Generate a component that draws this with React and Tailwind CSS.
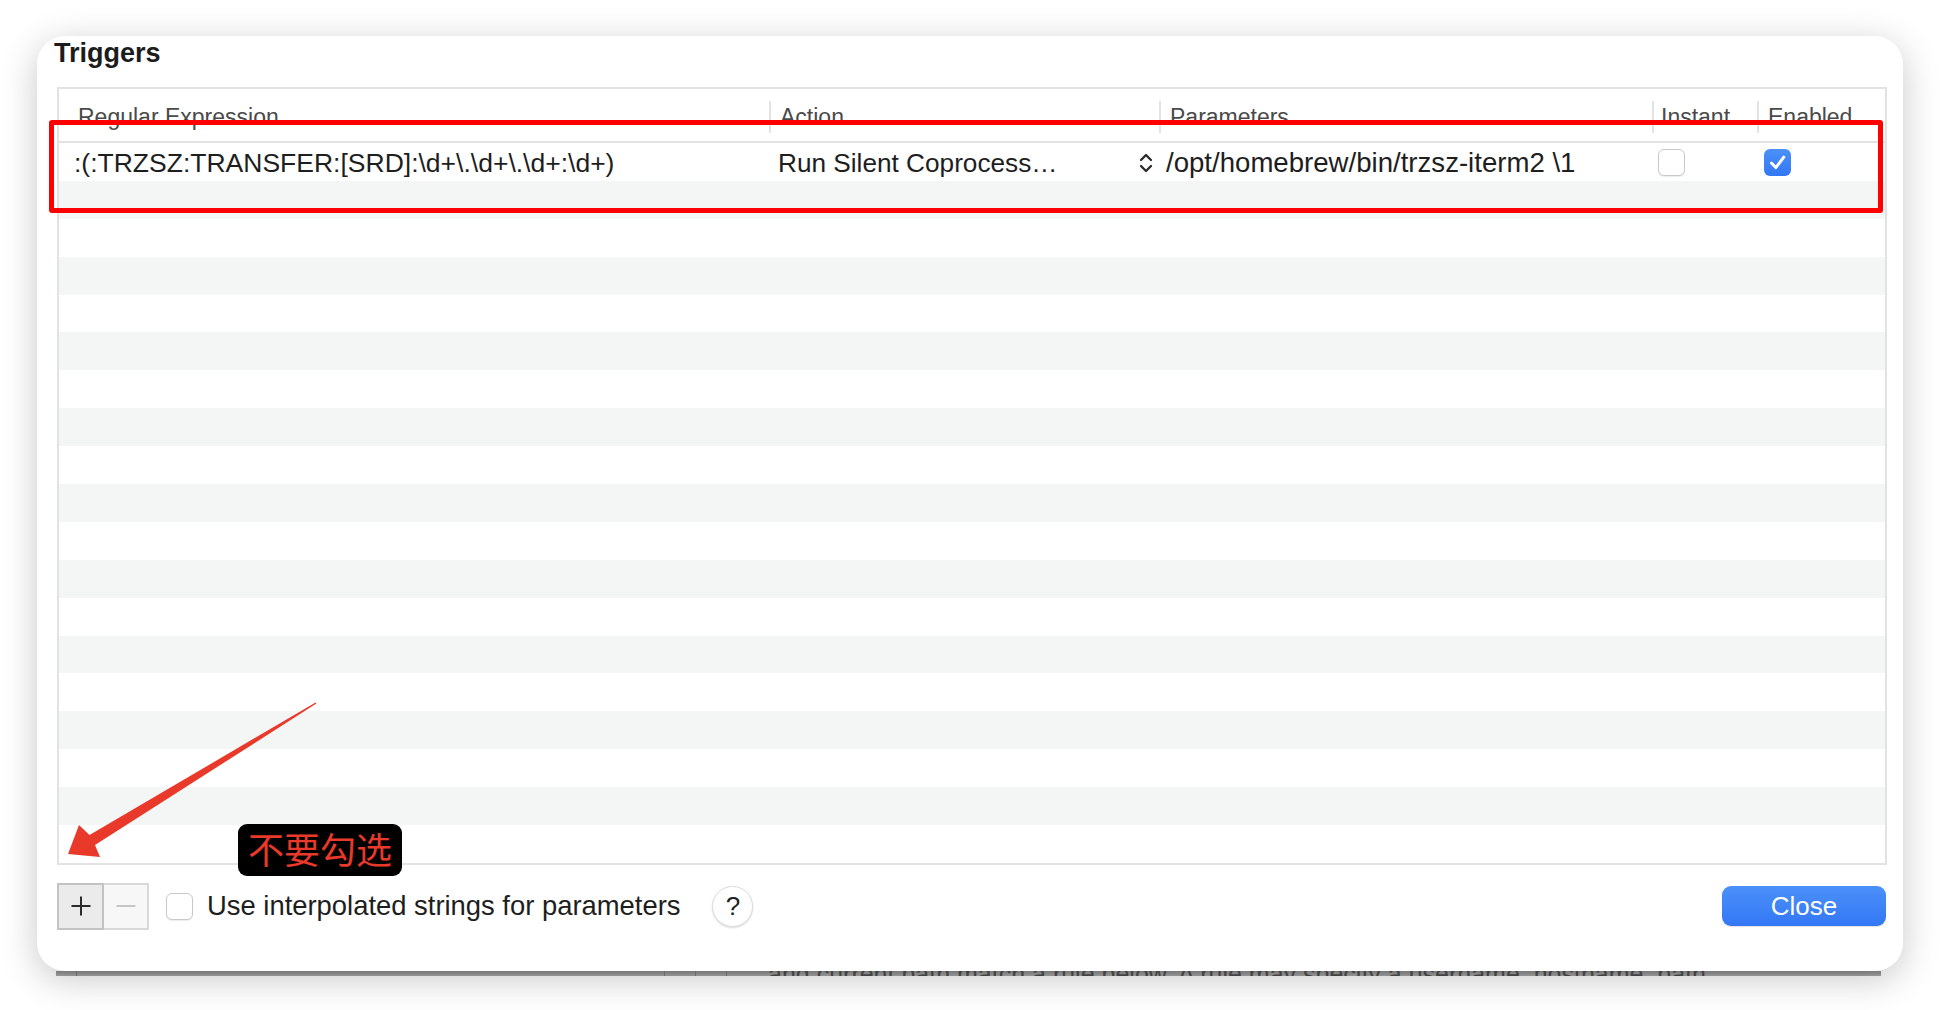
import React from "react";

const FONT = "font-['Liberation_Sans','Helvetica_Neue',Arial,sans-serif]";

function UpDown() {
  return (
    <svg width="16" height="24" viewBox="0 0 16 24" fill="none">
      <path d="M3 9 L8 4 L13 9" stroke="#2a2a2a" strokeWidth="2.3" strokeLinecap="round" strokeLinejoin="round" />
      <path d="M3 15 L8 20 L13 15" stroke="#2a2a2a" strokeWidth="2.3" strokeLinecap="round" strokeLinejoin="round" />
    </svg>
  );
}

function Unchecked() {
  return (
    <div className="w-[27px] h-[27px] rounded-[6px] border border-[#c9c9c9] bg-white shadow-[0_1px_1px_rgba(0,0,0,0.08)]" />
  );
}

function Checked() {
  return (
    <div className="w-[27px] h-[27px] rounded-[6px] bg-gradient-to-b from-[#4c90f9] to-[#3277f5] flex items-center justify-center">
      <svg width="27" height="27" viewBox="0 0 27 27" fill="none">
        <path d="M7.5 14 L11.8 18.6 L19.8 8.2" stroke="white" strokeWidth="3" strokeLinecap="round" strokeLinejoin="round" />
      </svg>
    </div>
  );
}

function HeaderCell({ w, label, ml, first }) {
  return (
    <div className={`flex items-center h-full shrink-0 ${w}`}>
      {!first && <div className="w-[2px] h-[32px] bg-[#e3e3e3] shrink-0" />}
      <span className={`${ml} text-[23px] leading-[26px] text-[#4a4a4a] whitespace-nowrap`}>{label}</span>
    </div>
  );
}

export default function App() {
  const emptyRows = Array.from({ length: 18 });
  return (
    <div className={`relative w-[1940px] h-[1010px] overflow-hidden bg-white ${FONT}`}>
      <div className="pt-[36px] pl-[37px]">
        {/* dialog */}
        <div className="relative z-10 w-[1866px] h-[935px] rounded-[28px] bg-white shadow-[0_8px_36px_rgba(0,0,0,0.22)] flex flex-col">
          <div className="pl-[17px] pt-[2px] h-[32px] text-[27px] leading-[30px] font-bold text-[#1c1c1c]">Triggers</div>

          {/* table */}
          <div className="ml-[20px] mt-[19px] w-[1830px] border-2 border-[#e2e2e2] flex flex-col bg-white">
            <div className="h-[54px] border-b-2 border-[#e2e2e2] flex items-center pt-[3px]">
              <HeaderCell first w="w-[710px]" ml="ml-[19px]" label="Regular Expression" />
              <HeaderCell w="w-[390px]" ml="ml-[9px]" label="Action" />
              <HeaderCell w="w-[493px]" ml="ml-[9px]" label="Parameters" />
              <HeaderCell w="w-[105px]" ml="ml-[7px]" label="Instant" />
              <HeaderCell w="w-[128px]" ml="ml-[9px]" label="Enabled" />
            </div>

            {/* data row */}
            <div className="h-[37.9px] flex items-center bg-white text-[#1e1e1e] pt-[2px]">
              <div className="w-[710px] shrink-0 pl-[15px] text-[26.5px] leading-[30px] whitespace-nowrap">
                {":(:TRZSZ:TRANSFER:[SRD]:\\d+\\.\\d+\\.\\d+:\\d+)"}
              </div>
              <div className="w-[392px] shrink-0 pl-[9px] pr-[7px] flex items-center justify-between text-[26.2px] leading-[30px] whitespace-nowrap">
                <span>Run Silent Coprocess…</span>
                <UpDown />
              </div>
              <div className="w-[491px] shrink-0 pl-[5px] text-[27.6px] leading-[30px] whitespace-nowrap">
                {"/opt/homebrew/bin/trzsz-iterm2 \\1"}
              </div>
              <div className="w-[105px] shrink-0 pl-[6px] flex items-center">
                <Unchecked />
              </div>
              <div className="w-[128px] shrink-0 pl-[7px] flex items-center">
                <Checked />
              </div>
            </div>

            {emptyRows.map((_, i) => (
              <div key={i} className={`h-[37.9px] ${i % 2 === 0 ? "bg-[#f4f5f5]" : "bg-white"}`} />
            ))}
          </div>

          {/* bottom bar */}
          <div className="ml-[20px] mr-[17px] mt-[18px] h-[47px] flex items-center">
            <div className="flex h-[47px]">
              <div className="w-[47px] h-[47px] bg-[#ebebeb] border-2 border-[#c3c3c3] flex items-center justify-center">
                <svg width="22" height="22" viewBox="0 0 22 22">
                  <path d="M11 1.5 V20.5 M1.5 11 H20.5" stroke="#2b2b2b" strokeWidth="2" />
                </svg>
              </div>
              <div className="w-[45px] h-[47px] bg-[#f7f7f7] border-2 border-l-0 border-[#d9d9d9] flex items-center justify-center">
                <svg width="22" height="22" viewBox="0 0 22 22">
                  <path d="M1.5 11 H20.5" stroke="#c6c6c6" strokeWidth="2" />
                </svg>
              </div>
            </div>
            <div className="ml-[17px]">
              <Unchecked />
            </div>
            <span className="ml-[14px] text-[27.4px] leading-[30px] text-[#1e1e1e] whitespace-nowrap">
              Use interpolated strings for parameters
            </span>
            <div className="ml-[32px] w-[41px] h-[41px] rounded-full bg-white border border-[#dcdcdc] shadow-[0_1px_2px_rgba(0,0,0,0.15)] flex items-center justify-center text-[26px] leading-none text-[#222]">
              ?
            </div>
            <button className="ml-auto w-[164px] h-[40px] rounded-[9px] bg-gradient-to-b from-[#4b90f9] to-[#3477f5] text-white text-[26px] leading-[30px] shadow-[0_1px_1px_rgba(0,0,0,0.12)]">
              Close
            </button>
          </div>
        </div>

        {/* parent window glimpse behind the sheet */}
        <div className="ml-[19px] w-[1825px] h-[5px] overflow-hidden bg-gradient-to-b from-[#8b8b8b] to-[#a9a9a9] flex items-start">
          <div className="w-[20px] shrink-0" />
          <div className="w-[1px] h-full bg-[#777] shrink-0" />
          <div className="w-[587px] shrink-0" />
          <div className="w-[1px] h-full bg-[#7a7a7a] shrink-0" />
          <div className="w-[30px] shrink-0" />
          <div className="w-[1px] h-full bg-[#7a7a7a] shrink-0" />
          <div className="w-[30px] shrink-0" />
          <div className="w-[1px] h-full bg-[#7a7a7a] shrink-0" />
          <div className="w-[41px] shrink-0" />
          <div className="mt-[-9px] text-[25px] leading-[25px] text-[#4d4d4d] whitespace-nowrap">
            and current path match a rule below. A rule may specify a username, hostname, path
          </div>
        </div>
      </div>

      {/* annotations */}
      <div className="absolute z-20 left-[49px] top-[120px] w-[1834px] h-[93px] border-[5px] border-[#ff0000] rounded-[3px] pointer-events-none" />

      <svg className="absolute z-20 left-0 top-0 pointer-events-none" width="1940" height="1010">
        <polygon
          points="68,854 79,825 89.5,835 315.6,702.4 316.4,703.6 95,845 100,857"
          fill="#e8392a"
        />
      </svg>

      <div className="absolute z-20 left-[238px] top-[824px] w-[164px] h-[52px] rounded-[9px] bg-black flex items-center justify-center pb-[4px]">
        <span className="font-['Noto_Sans_CJK_SC',sans-serif] text-[36px] leading-[40px] text-[#e8392a]">不要勾选</span>
      </div>
    </div>
  );
}
